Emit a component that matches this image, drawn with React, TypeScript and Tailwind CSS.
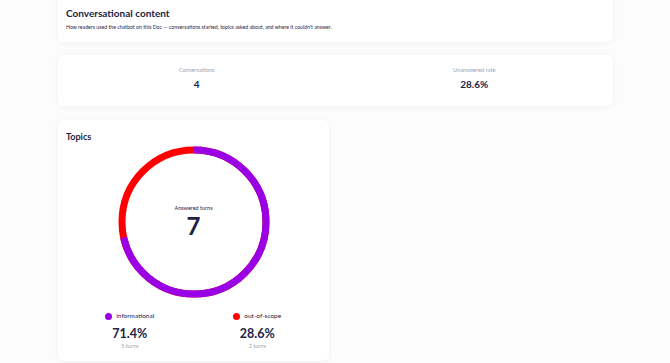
const navy = "text-[#1b2447]";

const Donut = () => {
	const r = 72;
	const c = 2 * Math.PI * r;
	const purple = 0.714 * c;
	return (
		<svg width="160" height="160" viewBox="0 0 160 160">
			<g transform="rotate(-90 80 80)">
				<circle cx="80" cy="80" r={r} fill="none" stroke="#ff0000" strokeWidth="7" />
				<circle
					cx="80"
					cy="80"
					r={r}
					fill="none"
					stroke="#9a00e6"
					strokeWidth="7"
					strokeDasharray={`${purple} ${c}`}
				/>
			</g>
		</svg>
	);
};

const Legend = ({ color, label, pct, turns }: { color: string; label: string; pct: string; turns: string }) => (
	<div className="flex flex-col items-center">
		<div className="flex items-center gap-[4px]">
			<span className={`w-[7px] h-[7px] rounded-full ${color}`} />
			<span className={`text-[6.5px] ${navy}`}>{label}</span>
		</div>
		<div className={`mt-[7px] text-[12.5px] font-bold leading-none ${navy}`}>{pct}</div>
		<div className="mt-[2px] text-[5.5px] text-[#9ca3af]">{turns}</div>
	</div>
);

export default function App() {
	return (
		<div
			className="w-[670px] h-[363px] overflow-hidden bg-[#fcfcfc]"
			style={{ fontFamily: "Lato, 'Open Sans', sans-serif" }}
		>
			<div className="ml-[58px] w-[555px] flex flex-col gap-[13px] -mt-[8px]">
				<div className="bg-white rounded-[6px] shadow-[0_1px_6px_rgba(0,0,0,0.05)] px-[8px] pt-[16px] pb-[12px]">
					<h1 className={`text-[10px] font-bold leading-none ${navy}`}>Conversational content</h1>
					<p className={`mt-[7px] text-[5.2px] leading-none ${navy}`}>
						How readers used the chatbot on this Doc — conversations started, topics asked about, and where it couldn't answer.
					</p>
				</div>
				<div className="bg-white rounded-[6px] shadow-[0_1px_6px_rgba(0,0,0,0.05)] grid grid-cols-2 h-[51px] pt-[12px]">
					<div className="flex flex-col items-center">
						<span className="text-[5.7px] leading-none text-[#9ca3af]">Conversations</span>
						<span className={`mt-[6px] text-[10px] font-bold leading-none ${navy}`}>4</span>
					</div>
					<div className="flex flex-col items-center">
						<span className="text-[5.7px] leading-none text-[#9ca3af]">Unanswered rate</span>
						<span className={`mt-[6px] text-[10px] font-bold leading-none ${navy}`}>28.6%</span>
					</div>
				</div>
				<div className="w-[271px] bg-white rounded-[6px] shadow-[0_1px_6px_rgba(0,0,0,0.05)] px-[8px] pt-[12px] pb-[10px] mt-px">
					<h2 className={`text-[9px] font-bold leading-none ${navy}`}>Topics</h2>
					<div className="relative flex justify-center mt-[1px]">
						<Donut />
						<div className="absolute inset-0 flex flex-col items-center justify-center">
							<span className={`text-[5.5px] leading-none ${navy}`}>Answered turns</span>
							<span className={`mt-[3px] text-[24px] font-bold leading-none ${navy}`}>7</span>
						</div>
					</div>
					<div className="grid grid-cols-2 mt-[9px]">
						<Legend color="bg-[#9a00e6]" label="informational" pct="71.4%" turns="5 turns" />
						<Legend color="bg-[#ff0000]" label="out-of-scope" pct="28.6%" turns="2 turns" />
					</div>
				</div>
			</div>
		</div>
	);
}
